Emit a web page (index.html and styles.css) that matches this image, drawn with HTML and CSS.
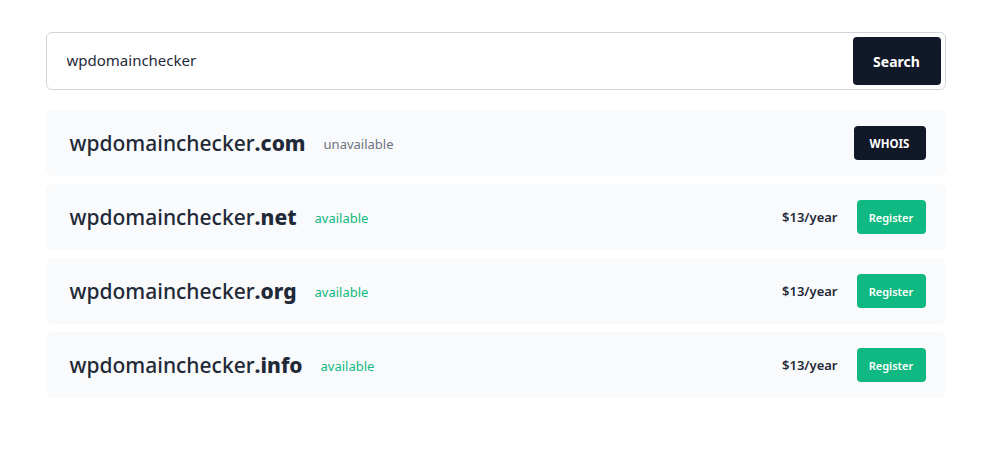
FILE: index.html
```html
<!DOCTYPE html>
<html>
<head>
<meta charset="utf-8">
<link rel="stylesheet" href="styles.css">
</head>
<body>
<div class="wrap">
  <form class="search">
    <input class="search-input" type="text" value="wpdomainchecker">
    <button class="btn btn-dark search-btn" type="button">Search</button>
  </form>
  <div class="results">
    <div class="row">
      <div class="name"><span class="sld">wpdomainchecker</span><span class="tld">.com</span></div>
      <span class="status unavailable">unavailable</span>
      <div class="right">
        <button class="btn btn-dark small whois" type="button">WHOIS</button>
      </div>
    </div>
    <div class="row">
      <div class="name"><span class="sld">wpdomainchecker</span><span class="tld">.net</span></div>
      <span class="status available">available</span>
      <div class="right">
        <span class="price">$13/year</span>
        <button class="btn btn-green small" type="button">Register</button>
      </div>
    </div>
    <div class="row">
      <div class="name"><span class="sld">wpdomainchecker</span><span class="tld">.org</span></div>
      <span class="status available">available</span>
      <div class="right">
        <span class="price">$13/year</span>
        <button class="btn btn-green small" type="button">Register</button>
      </div>
    </div>
    <div class="row">
      <div class="name"><span class="sld">wpdomainchecker</span><span class="tld">.info</span></div>
      <span class="status available">available</span>
      <div class="right">
        <span class="price">$13/year</span>
        <button class="btn btn-green small" type="button">Register</button>
      </div>
    </div>
  </div>
</div>
</body>
</html>
```
FILE: styles.css
```css
* { box-sizing: border-box; }
body {
  margin: 0;
  background: #fff;
  font-family: "Noto Sans", "Open Sans", sans-serif;
  color: #111827;
}
.wrap {
  width: 900px;
  margin: 32px auto 0;
}
.search {
  display: flex;
  align-items: center;
  height: 58px;
  border: 1px solid #d1d5db;
  border-radius: 6px;
  padding: 4px;
  margin: 0 0 20px;
}
.search-input {
  flex: 1;
  border: 0;
  outline: none;
  font-family: inherit;
  font-size: 15px;
  color: #1f2937;
  padding: 0 0 2px 16px;
  background: transparent;
}
.btn {
  border: 0;
  font-family: inherit;
  font-weight: 700;
  color: #fff;
  cursor: pointer;
}
.btn-dark { background: #111827; }
.btn-green { background: #10b981; }
.search-btn {
  width: 88px;
  height: 48px;
  border-radius: 4px;
  font-size: 14px;
}
.results {
  display: flex;
  flex-direction: column;
  gap: 8px;
}
.row {
  display: flex;
  align-items: center;
  height: 66px;
  background: #f9fafb;
  border-radius: 8px;
  padding: 0 20px 0 24px;
}
.name {
  font-size: 21px;
  color: #1f2937;
  font-weight: 500;
}
.tld { font-weight: 800; }
.status {
  font-size: 13px;
  margin-left: 18px;
  padding-top: 2px;
}
.unavailable { color: #6b7280; }
.available { color: #10b981; }
.right {
  margin-left: auto;
  display: flex;
  align-items: center;
  gap: 19px;
}
.price {
  font-size: 13px;
  font-weight: 600;
  color: #1f2937;
}
.small {
  height: 34px;
  border-radius: 4px;
  padding: 0;
}
.whois { width: 72px; font-size: 11.5px; }
.btn-green.small { width: 69px; font-size: 11px; font-weight: 600; }
```
